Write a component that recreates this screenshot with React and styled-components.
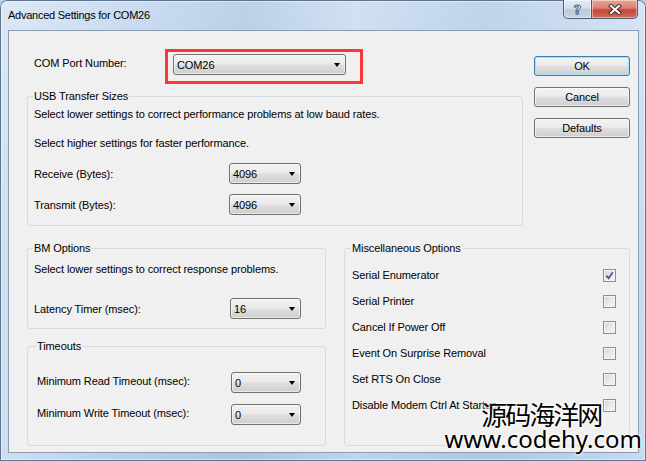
import React from "react";
import styled, { createGlobalStyle } from "styled-components";

const GlobalStyle = createGlobalStyle`
  html, body {
    margin: 0;
    padding: 0;
  }
  body {
    width: 646px;
    height: 461px;
    overflow: hidden;
    background: #b9d1ea;
    font-family: "Liberation Sans", Arial, sans-serif;
    font-size: 11px;
    letter-spacing: -0.1px;
    color: #000;
  }
`;

const Frame = styled.div`
  position: relative;
  width: 646px;
  height: 461px;
  box-sizing: border-box;
  display: flex;
  flex-direction: column;
  border-radius: 7px 7px 0 0;
  background:
    linear-gradient(90deg, rgba(255,255,255,0.35) 0%, rgba(255,255,255,0) 22%, rgba(110,140,175,0.14) 38%, rgba(255,255,255,0.15) 55%, rgba(110,140,175,0.1) 75%, rgba(255,255,255,0.25) 100%),
    linear-gradient(180deg, #cadcf1 0%, #bcd3ec 40%, #b5cde8 100%);
  box-shadow: inset 0 0 0 1px #5d738f, inset 0 0 0 2px rgba(255,255,255,0.45);
`;

const TitleBar = styled.div`
  height: 30px;
  display: flex;
  align-items: flex-start;
  justify-content: space-between;
  padding-left: 8px;
`;

const Title = styled.div`
  line-height: 30px;
  letter-spacing: -0.25px;
`;

const Captions = styled.div`
  display: flex;
  margin-right: 8px;
`;

const CaptionButton = styled.div`
  width: ${p => (p.$close ? 46 : 29)}px;
  height: 19px;
  box-sizing: border-box;
  border: 1px solid #4a5d78;
  border-top: none;
  border-left-width: ${p => (p.$close ? 0 : 1)}px;
  border-radius: ${p => (p.$close ? "0 0 5px 0" : "0 0 0 5px")};
  display: flex;
  align-items: center;
  justify-content: center;
  background: ${p =>
    p.$close
      ? "linear-gradient(180deg, #e8a493 0%, #d98170 45%, #c4463a 55%, #d06a55 100%)"
      : "linear-gradient(180deg, #e3ecf5 0%, #d2dfec 45%, #b9cadb 55%, #c6d6e6 100%)"};
  box-shadow: inset 0 0 0 1px rgba(255,255,255,0.45);
`;

const HelpGlyph = styled.span`
  font-family: "DejaVu Sans", sans-serif;
  font-weight: bold;
  font-size: 13px;
  line-height: 1;
  color: #f4f7fa;
  -webkit-text-stroke: 0.8px #3a4a60;
`;

const Client = styled.div`
  flex: 1;
  margin: 0 7px 8px 8px;
  background: #f0f0f0;
  border: 1px solid #8a9cb2;
  padding: 18px 8px 0 18px;
  display: flex;
  flex-direction: column;
`;

const TopSection = styled.div`
  display: grid;
  grid-template-columns: 496px 96px;
  column-gap: 11px;
  align-items: start;
`;

const Column = styled.div`
  display: flex;
  flex-direction: column;
  padding-top: ${p => p.$top || 0}px;
  gap: ${p => p.$gap || 0}px;
`;

const ComRow = styled.div`
  display: flex;
  height: 35px;
`;

const ComLabel = styled.div`
  width: 138px;
  box-sizing: border-box;
  padding-left: 7px;
  margin-top: 7px;
  line-height: 14px;
`;

const Highlight = styled.div`
  width: 198px;
  height: 35px;
  box-sizing: border-box;
  border: 3px solid #ff3535;
  padding: 2px 0 0 5px;
`;

const Combo = styled.div`
  position: relative;
  width: ${p => p.$width}px;
  height: 21px;
  box-sizing: border-box;
  border: 1px solid #707070;
  border-radius: 3px;
  background: linear-gradient(180deg, #f2f2f2 0%, #ebebeb 45%, #dddddd 55%, #cfcfcf 100%);
  box-shadow: inset 0 0 0 1px rgba(255,255,255,0.55);
  display: flex;
  align-items: center;
  padding-left: 3px;
  line-height: 14px;
  &::after {
    content: "";
    position: absolute;
    right: 5px;
    top: 8px;
    border-left: 3.5px solid transparent;
    border-right: 3.5px solid transparent;
    border-top: 4px solid #000;
  }
`;

const Group = styled.fieldset`
  margin: ${p => p.$mt || 0}px 0 0 0;
  padding: ${p => p.$pt}px ${p => p.$pr || 6}px ${p => p.$pb}px ${p => p.$pl || 6}px;
  border: 1px solid #d5dbe0;
  border-radius: 3px;
  min-width: 0;
  display: flex;
  flex-direction: column;
`;

const Legend = styled.legend`
  padding: 0 1px;
  margin-left: -1px;
  line-height: 14px;
`;

const Note = styled.div`
  line-height: 14px;
  margin-top: ${p => p.$mt || 0}px;
`;

const FieldRow = styled.div`
  display: flex;
  align-items: center;
  margin-top: ${p => p.$mt || 0}px;
`;

const FieldLabel = styled.div`
  width: ${p => p.$w}px;
  line-height: 14px;
  margin-top: ${p => p.$shift || 0}px;
`;

const Button = styled.div`
  height: 20px;
  box-sizing: border-box;
  border: 1px solid ${p => (p.$default ? "#3c7fb1" : "#707070")};
  border-radius: 3px;
  background: linear-gradient(180deg, #f2f2f2 0%, #ebebeb 45%, #dddddd 55%, #cfcfcf 100%);
  box-shadow: inset 0 0 0 1px ${p => (p.$default ? "#a9dcf6" : "rgba(255,255,255,0.6)")};
  display: flex;
  align-items: center;
  justify-content: center;
  line-height: 14px;
`;

const BottomSection = styled.div`
  display: grid;
  grid-template-columns: 299px 286px;
  column-gap: 18px;
  margin-top: 15px;
`;

const OptionRow = styled.div`
  height: 26px;
  display: flex;
  align-items: center;
  justify-content: space-between;
  line-height: 14px;
`;

const CheckBox = styled.div`
  width: 13px;
  height: 13px;
  box-sizing: border-box;
  border: 1px solid #8f8f8f;
  background: linear-gradient(135deg, #d2d2d2 0%, #e8e8e8 50%, #f7f7f7 100%);
  box-shadow: inset 0 0 0 1px #f4f4f4;
  display: flex;
  align-items: center;
  justify-content: center;
`;

const Watermark = styled.div`
  position: absolute;
  right: 4px;
  bottom: 9px;
  display: flex;
  flex-direction: column;
  align-items: center;
  pointer-events: none;
  color: #000;
  text-shadow: 0 0 2px #fff, 0 0 3px #fff, 0 0 4px #fff;
`;

const WatermarkName = styled.div`
  font-family: "Noto Sans CJK SC", sans-serif;
  font-size: 26px;
  line-height: 24px;
  letter-spacing: -2px;
  margin-right: 4px;
`;

const WatermarkUrl = styled.div`
  font-family: "Noto Sans", sans-serif;
  font-size: 24px;
  line-height: 26px;
  letter-spacing: 0;
`;

const Check = () => (
  <svg width="9" height="9" viewBox="0 0 9 9">
    <path d="M1.2 4.6 L3.6 7.2 L7.8 1.2" fill="none" stroke="#4c5e86" strokeWidth="1.8" />
  </svg>
);

const CloseGlyph = () => (
  <svg width="14" height="11" viewBox="0 0 14 11">
    <path d="M3 2 L11 9 M11 2 L3 9" stroke="#3b2420" strokeWidth="4" strokeLinecap="square" />
    <path d="M3 2 L11 9 M11 2 L3 9" stroke="#ffffff" strokeWidth="2.2" strokeLinecap="square" />
  </svg>
);

const options = [
  { label: "Serial Enumerator", checked: true },
  { label: "Serial Printer" },
  { label: "Cancel If Power Off" },
  { label: "Event On Surprise Removal" },
  { label: "Set RTS On Close" },
  { label: "Disable Modem Ctrl At Startup" },
];

export default function App() {
  return (
    <>
      <GlobalStyle />
      <Frame>
        <TitleBar>
          <Title>Advanced Settings for COM26</Title>
          <Captions>
            <CaptionButton>
              <HelpGlyph>?</HelpGlyph>
            </CaptionButton>
            <CaptionButton $close>
              <CloseGlyph />
            </CaptionButton>
          </Captions>
        </TitleBar>
        <Client>
          <TopSection>
            <Column>
              <ComRow>
                <ComLabel>COM Port Number:</ComLabel>
                <Highlight>
                  <Combo $width={173}>COM26</Combo>
                </Highlight>
              </ComRow>
              <Group $mt={5} $pt={4} $pb={10}>
                <Legend>USB Transfer Sizes</Legend>
                <Note>Select lower settings to correct performance problems at low baud rates.</Note>
                <Note $mt={15}>Select higher settings for faster performance.</Note>
                <FieldRow $mt={13}>
                  <FieldLabel $w={195}>Receive (Bytes):</FieldLabel>
                  <Combo $width={72}>4096</Combo>
                </FieldRow>
                <FieldRow $mt={10}>
                  <FieldLabel $w={195}>Transmit (Bytes):</FieldLabel>
                  <Combo $width={72}>4096</Combo>
                </FieldRow>
              </Group>
            </Column>
            <Column $top={7} $gap={11}>
              <Button $default>OK</Button>
              <Button>Cancel</Button>
              <Button>Defaults</Button>
            </Column>
          </TopSection>
          <BottomSection>
            <Column>
              <Group $pt={7} $pb={9}>
                <Legend>BM Options</Legend>
                <Note>Select lower settings to correct response problems.</Note>
                <FieldRow $mt={22}>
                  <FieldLabel $w={196}>Latency Timer (msec):</FieldLabel>
                  <Combo $width={71}>16</Combo>
                </FieldRow>
              </Group>
              <Group $mt={10} $pt={19} $pb={20} $pl={9}>
                <Legend>Timeouts</Legend>
                <FieldRow>
                  <FieldLabel $w={194} $shift={-3}>Minimum Read Timeout (msec):</FieldLabel>
                  <Combo $width={70}>0</Combo>
                </FieldRow>
                <FieldRow $mt={11}>
                  <FieldLabel $w={194} $shift={-3}>Minimum Write Timeout (msec):</FieldLabel>
                  <Combo $width={70}>0</Combo>
                </FieldRow>
              </Group>
            </Column>
            <Group $pt={7} $pb={0} $pl={7} $pr={13}>
              <Legend>Miscellaneous Options</Legend>
              {options.map(o => (
                <OptionRow key={o.label}>
                  <span>{o.label}</span>
                  <CheckBox>{o.checked && <Check />}</CheckBox>
                </OptionRow>
              ))}
            </Group>
          </BottomSection>
        </Client>
        <Watermark>
          <WatermarkName>源码海洋网</WatermarkName>
          <WatermarkUrl>www.codehy.com</WatermarkUrl>
        </Watermark>
      </Frame>
    </>
  );
}
